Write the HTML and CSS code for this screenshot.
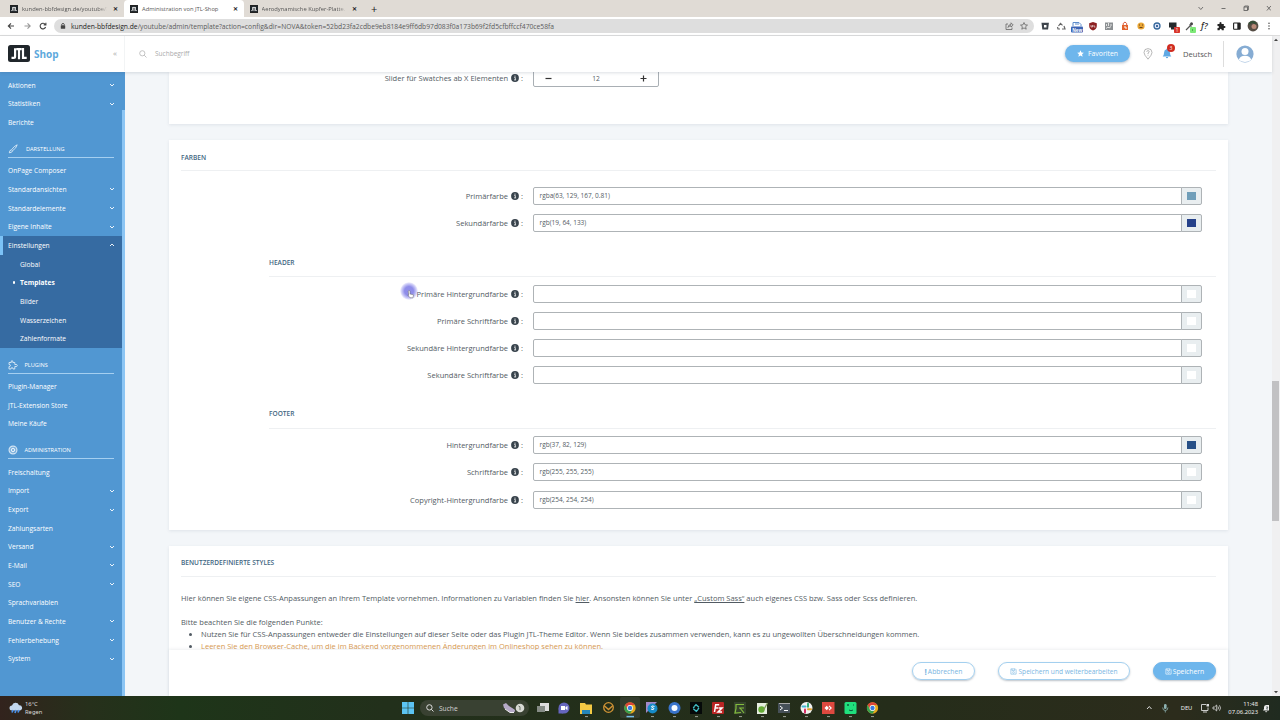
FILE: index.html
```html
<!DOCTYPE html>
<html lang="de">
<head>
<meta charset="utf-8">
<title>Administration von JTL-Shop</title>
<link rel="stylesheet" href="styles.css">
</head>
<body>
<svg width="0" height="0" class="defs">
  <symbol id="jtl" viewBox="0 0 22 17"><rect width="22" height="17" rx="2.5" fill="#20262b"/><path d="M3.500 12.800h2.200q1.400 0 1.400-1.400V3.200M8.300 4.200h5.400M11 4.200v10M15 3v9.800h3.700" fill="none" stroke="#fff" stroke-width="2.200"/></symbol>
  <symbol id="down" viewBox="0 0 6 6"><path d="M1 2l2 2 2-2" fill="none" stroke="currentColor" stroke-width=".9"/></symbol>
  <symbol id="info" viewBox="0 0 8 8"><circle cx="4" cy="4" r="3.900" fill="#38434c"/><path d="M3.300 3.500h1v2.300M3.100 5.900h2" stroke="#fff" stroke-width=".8" fill="none"/><circle cx="4" cy="2.100" r=".6" fill="#fff"/></symbol>
  <symbol id="disk" viewBox="0 0 8 8"><path d="M1 1h5l1 1v5H1zM2.300 1v2h3V1" fill="none" stroke="currentColor" stroke-width=".7"/><circle cx="4" cy="5.100" r="1" fill="none" stroke="currentColor" stroke-width=".6"/></symbol>
  <symbol id="chrome" viewBox="0 0 12 12"><circle cx="6" cy="6" r="5.700" fill="#e5a91c"/><path d="M1.100 3.100A5.700 5.700 0 0 1 10.900 3.100H6L3.500 7.400z" fill="#dc4639"/><path d="M1.100 3.100A5.700 5.700 0 0 0 6 11.700L8.500 7.400 6 8.600 3.500 7.400z" fill="#37a04f"/><circle cx="6" cy="6" r="2.900" fill="#fff"/><circle cx="6" cy="6" r="2.200" fill="#3b7be0"/></symbol>
</svg>

<div class="tabs">
  <div class="tab"><svg class="fav"><use href="#jtl"/></svg><span class="ttl t1">kunden-bbfdesign.de/youtube/?</span><span class="x">✕</span></div>
  <div class="tab on"><svg class="fav"><use href="#jtl"/></svg><span class="ttl t2">Administration von JTL-Shop</span><span class="x">✕</span></div>
  <div class="tab"><svg class="fav"><use href="#jtl"/></svg><span class="ttl t3">Aerodynamische Kupfer-Platte. E</span><span class="x">✕</span></div>
  <span class="plus">+</span>
  <svg class="win" viewBox="0 0 80 16"><g fill="none" stroke="#555" stroke-width=".8"><path d="M7.500 6l2.300 2.500L12 6M30.500 7.500h4"/><rect x="53" y="6" width="3.500" height="3.500"/><path d="M54 5.800V5h3.700v3.800h-1M76.200 5l4 4.500M80.200 5l-4 4.500" transform="translate(-.3)"/></g></svg>
</div>

<div class="toolbar">
  <svg class="nav" viewBox="0 0 54 18"><g fill="none" stroke="#444" stroke-width="1.100"><path d="M14 9H8.500M11 6.300L8.300 9l2.700 2.700"/><path d="M24.500 9H30M27.500 6.300L30.200 9l-2.700 2.700" stroke="#999"/><path d="M45.300 7.500A2.800 2.800 0 1 0 45.600 10M45.900 5.800v2.100h-2.200"/></g></svg>
  <div class="url">
    <svg class="lock" viewBox="0 0 6 8"><rect x=".8" y="3.200" width="4.400" height="3.600" rx=".5" fill="#444"/><path d="M1.800 3.300V2q1.200-1.600 2.400 0v1.300" fill="none" stroke="#444" stroke-width=".8"/></svg>
    <span class="addr"><b>kunden-bbfdesign.de</b>/youtube/admin/template?action=config&amp;dir=NOVA&amp;token=52bd23fa2cdbe9eb8184e9ff6db97d083f0a173b69f2fd5cfbffccf470ce58fa</span>
    <svg class="share" viewBox="0 0 26 10"><g fill="none" stroke="#666" stroke-width=".8"><path d="M4 3H2v5.500h6V6.500M4 6.500Q4.200 3.500 7 3.500V1.800L9.200 4 7 6V4.700Q5 4.700 4 6.500zM20 1.500l1 2.300 2.500.3-1.900 1.600.6 2.500L20 6.900l-2.200 1.300.6-2.500-1.900-1.600 2.500-.3z"/></g></svg>
  </div>
  <svg class="ext" viewBox="1037 17 243 18">
    <path d="M1041.500 22.800h7.400l-.8 6.700h-5.800z" fill="#3d444b"/><path d="M1044 25h2.500v2.500h-2.500z" fill="#fff"/>
    <path d="M1058.500 26l2-2.700 2 2M1064 26l1 3h-3M1060 29h-2l-.5-2" fill="none" stroke="#666" stroke-width="1.200"/>
    <path d="M1073 26v-3.500h6l2 2V26" fill="none" stroke="#5d8ccb"/><path d="M1075 24h4" stroke="#5d8ccb"/><rect x="1071" y="26.500" width="12" height="6" rx="1" fill="#3d64b4"/><text x="1072.200" y="31.500" font-size="4.500" font-weight="700" fill="#fff">New</text>
    <path d="M1093 22l3.800 1.200V26q0 3-3.800 4.500-3.800-1.500-3.800-4.500v-2.800z" fill="#8c2021"/><path d="M1091 25v2h1.500v-2M1094 25v2h1.500" stroke="#fff" stroke-width=".6" fill="none"/>
    <path d="M1105 22.500h8v7.500h-8z" fill="#8c9093"/><path d="M1106.500 24v2M1108.500 23v3M1111 24v2M1106 28.500l2-1.500 1 1 2-1.500" stroke="#eee" stroke-width=".9" fill="none"/>
    <path d="M1122 25h6v5h-6z" fill="#e2632c"/><path d="M1123.200 25v-1.500q1.800-3 3.500 0V25" stroke="#d8593b" fill="none"/><path d="M1124 27h2v2" stroke="#fff" fill="none"/>
    <circle cx="1141" cy="26" r="3.600" fill="#e8a534"/><path d="M1139 25h1M1142 25h1M1139.500 27.500h3" stroke="#6d431c"/>
    <circle cx="1157" cy="26" r="3" fill="#eef" stroke="#37699c" stroke-width="1.300"/><circle cx="1157" cy="26" r="1.200" fill="#37699c"/>
    <path d="M1169 22.500h7.500v5h-2.500v2h-3v-2h-2z" fill="#252a2d"/><rect x="1174" y="27" width="6" height="6" rx=".8" fill="#d8352c"/><text x="1175.700" y="31.700" font-size="4.500" fill="#fff">1</text>
    <path d="M1186 30l4.500-4.500M1189.500 24.500l2 2" stroke="#555" stroke-width="1.200"/><circle cx="1191.500" cy="23.800" r="1.500" fill="#444"/><rect x="1190" y="27" width="6" height="6" rx="1" fill="#7de977"/><path d="M1192 30h1" stroke="#286f2b"/>
    <text x="1201" y="29" font-size="8.500" font-style="italic" font-weight="600" fill="#333">f?</text>
    <path d="M1217.500 24h2q-.4-2 1-2t1 2h2.300v2q1.700-.4 1.700 1t-1.700 1v2.200h-2q0-1.500-1.100-1.500t-1.100 1.500h-2.100v-2.300q1.600 0 1.600-1t-1.600-1z" fill="#252525"/>
    <rect x="1233.600" y="23" width="6.500" height="6.200" rx=".5" fill="#fff" stroke="#222" stroke-width="1.100"/><path d="M1237.300 23h3v6h-3z" fill="#222"/>
    <circle cx="1253" cy="26" r="5.400" fill="#554d45"/><circle cx="1254" cy="26.500" r="2.500" fill="#b98978"/><path d="M1249 24q4-4 7 0" stroke="#334e36" stroke-width="2" fill="none"/>
    <g fill="#333"><circle cx="1269" cy="23.300" r=".7"/><circle cx="1269" cy="26" r=".7"/><circle cx="1269" cy="28.700" r=".7"/></g>
  </svg>
</div>

<div class="page">
  <div class="site">
    <header class="head">
      <div class="brand"><svg class="logo"><use href="#jtl"/></svg><span class="shop">Shop</span><span class="coll">«</span></div>
      <svg class="mag" viewBox="0 0 8 8"><circle cx="3.300" cy="3.300" r="2.600" fill="none" stroke="#b5b5b5" stroke-width=".8"/><path d="M5.200 5.200L7.500 7.500" stroke="#b5b5b5" stroke-width=".8"/></svg>
      <span class="such">Suchbegriff</span>
      <div class="favbtn"><svg viewBox="0 0 8 8"><path d="M4 .3l1.100 2.500 2.700.3-2 1.800.6 2.700L4 6.200 1.600 7.600l.6-2.700-2-1.800 2.700-.3z" fill="#fff"/></svg><span>Favoriten</span></div>
      <svg class="pin" viewBox="0 0 10 12"><path d="M5 11.200Q1 6.800 1 4.500a4 3.900 0 0 1 8 0Q9 6.800 5 11.200zM3.700 3.800Q3.900 2.600 5 2.600q1.200 0 1.200 1.100Q6.200 4.500 5 5v1M5 6.800v.8" fill="none" stroke="#888" stroke-width=".6"/></svg>
      <div class="bell"><svg viewBox="0 0 10 11"><path d="M5 .5Q5.600.5 5.600 1.300 8 2 8 5q0 2.300 1.300 3.400H.7Q2 7.300 2 5q0-3 2.400-3.700Q4.400.5 5 .5zM3.800 9h2.400Q6 10.300 5 10.300T3.800 9z" fill="#5fa9e4"/></svg><span class="cnt">3</span></div>
      <span class="lang">Deutsch</span>
      <svg class="user" viewBox="0 0 18 18"><circle cx="9" cy="9" r="8.600" fill="#86acd3"/><circle cx="9" cy="6.600" r="3.500" fill="#fff"/><path d="M2.800 14.700Q4 10.700 9 10.700t6.200 4Q13 17 9 17t-6.200-2.300z" fill="#fff"/></svg>
    </header>
    <div class="body">
      <nav class="side">
        <div class="menu">
          <a class="it">Aktionen<svg><use href="#down"/></svg></a><a class="it">Statistiken<svg><use href="#down"/></svg></a><a class="it">Berichte</a>
          <div class="sec s1"><svg viewBox="0 0 10 10"><path d="M9.200.8Q6 2 3.500 5.800l1 1Q8.500 4 9.200.8zM3.300 6Q1.500 6 1.300 8.800 4 8.800 4.400 7" fill="none" stroke="#fff" stroke-width=".7"/></svg><span>DARSTELLUNG</span></div>
          <a class="it">OnPage Composer</a><a class="it">Standardansichten<svg><use href="#down"/></svg></a><a class="it">Standardelemente<svg><use href="#down"/></svg></a><a class="it">Eigene Inhalte<svg><use href="#down"/></svg></a>
          <div class="open">
            <a class="it cur">Einstellungen<svg class="up"><use href="#down"/></svg></a>
            <a class="it sub">Global</a><a class="it sub act">Templates</a><a class="it sub">Bilder</a><a class="it sub">Wasserzeichen</a><a class="it sub">Zahlenformate</a>
          </div>
          <div class="sec s2"><svg viewBox="0 0 10 10"><path d="M1 2.500h2.300Q2.800.6 4 .6t.8 1.900h2v2Q9.300 4 9.300 5.500T6.800 6.500V9H5Q5 7.500 4 7.500T3 9H1V6.500q1.500 0 1.500-1T1 4.500z" fill="none" stroke="#fff" stroke-width=".7"/></svg><span>PLUGINS</span></div>
          <a class="it">Plugin-Manager</a><a class="it">JTL-Extension Store</a><a class="it">Meine Käufe</a>
          <div class="sec s3"><svg viewBox="0 0 10 10"><g fill="none" stroke="#fff"><circle cx="5" cy="5" r="3.900" stroke-width="1.200" opacity=".75"/><circle cx="5" cy="5" r="1.700" stroke-width=".8"/></g><circle cx="5" cy="5" r="3" fill="#fff" opacity=".3"/></svg><span>ADMINISTRATION</span></div>
          <a class="it">Freischaltung</a><a class="it">Import<svg><use href="#down"/></svg></a><a class="it">Export<svg><use href="#down"/></svg></a><a class="it">Zahlungsarten</a><a class="it">Versand<svg><use href="#down"/></svg></a><a class="it">E-Mail<svg><use href="#down"/></svg></a><a class="it">SEO<svg><use href="#down"/></svg></a><a class="it">Sprachvariablen</a><a class="it">Benutzer &amp; Rechte<svg><use href="#down"/></svg></a><a class="it">Fehlerbehebung<svg><use href="#down"/></svg></a><a class="it">System<svg><use href="#down"/></svg></a>
        </div>
        <div class="sbar"></div>
      </nav>
      <main class="main">
        <section class="card c1">
          <div class="row"><span class="lab">Slider für Swatches ab X Elementen</span><svg class="inf"><use href="#info"/></svg><span class="col">:</span>
            <div class="num"><svg viewBox="0 0 7 7"><path d="M.5 3.500h6"/></svg><span>12</span><svg viewBox="0 0 7 7"><path d="M.5 3.500h6M3.500.5v6"/></svg></div></div>
        </section>
        <section class="card c2">
          <h2>FARBEN</h2>
          <div class="rows g1">
            <div class="row"><span class="lab">Primärfarbe</span><svg class="inf"><use href="#info"/></svg><span class="col">:</span><div class="inp">rgba(63, 129, 167, 0.81)</div><div class="sw"><i class="a"></i></div></div>
            <div class="row"><span class="lab">Sekundärfarbe</span><svg class="inf"><use href="#info"/></svg><span class="col">:</span><div class="inp">rgb(19, 64, 133)</div><div class="sw"><i class="b"></i></div></div>
          </div>
          <h3>HEADER</h3>
          <div class="rows g2">
            <div class="row"><span class="lab">Primäre Hintergrundfarbe</span><svg class="inf"><use href="#info"/></svg><span class="col">:</span><div class="inp"></div><div class="sw"><i></i></div></div>
            <div class="row"><span class="lab">Primäre Schriftfarbe</span><svg class="inf"><use href="#info"/></svg><span class="col">:</span><div class="inp"></div><div class="sw"><i></i></div></div>
            <div class="row"><span class="lab">Sekundäre Hintergrundfarbe</span><svg class="inf"><use href="#info"/></svg><span class="col">:</span><div class="inp"></div><div class="sw"><i></i></div></div>
            <div class="row"><span class="lab">Sekundäre Schriftfarbe</span><svg class="inf"><use href="#info"/></svg><span class="col">:</span><div class="inp"></div><div class="sw"><i></i></div></div>
          </div>
          <h3>FOOTER</h3>
          <div class="rows g2">
            <div class="row"><span class="lab">Hintergrundfarbe</span><svg class="inf"><use href="#info"/></svg><span class="col">:</span><div class="inp">rgb(37, 82, 129)</div><div class="sw"><i class="c"></i></div></div>
            <div class="row"><span class="lab">Schriftfarbe</span><svg class="inf"><use href="#info"/></svg><span class="col">:</span><div class="inp">rgb(255, 255, 255)</div><div class="sw"><i></i></div></div>
            <div class="row"><span class="lab">Copyright-Hintergrundfarbe</span><svg class="inf"><use href="#info"/></svg><span class="col">:</span><div class="inp">rgb(254, 254, 254)</div><div class="sw"><i></i></div></div>
          </div>
        </section>
        <section class="card c3">
          <h2>BENUTZERDEFINIERTE STYLES</h2>
          <p class="p1">Hier können Sie eigene CSS-Anpassungen an Ihrem Template vornehmen. Informationen zu Variablen finden Sie <u>hier</u>. Ansonsten können Sie unter <u>„Custom Sass“</u> auch eigenes CSS bzw. Sass oder Scss definieren.</p>
          <p class="p2">Bitte beachten Sie die folgenden Punkte:</p>
          <ul><li>Nutzen Sie für CSS-Anpassungen entweder die Einstellungen auf dieser Seite oder das Plugin JTL-Theme Editor. Wenn Sie beides zusammen verwenden, kann es zu ungewollten Überschneidungen kommen.</li><li><span class="or">Leeren Sie den Browser-Cache, um die im Backend vorgenommenen Änderungen im Onlineshop sehen zu können.</span></li></ul>
        </section>
        <div class="actions">
          <div class="btn b1"><b>!</b><span>Abbrechen</span></div>
          <div class="btn b2"><svg><use href="#disk"/></svg><span>Speichern und weiterbearbeiten</span></div>
          <div class="btn b3"><svg><use href="#disk"/></svg><span>Speichern</span></div>
        </div>
      </main>
    </div>
  </div>
  <div class="scroll"><svg viewBox="0 0 8 8"><path d="M2 5l2-2.300L6 5z" fill="#444"/></svg><div class="thumb"></div><svg viewBox="0 0 8 8"><path d="M2 3l2 2.300L6 3z" fill="#444"/></svg></div>
</div>

<div class="task">
  <svg class="wx" viewBox="0 0 14 12"><path d="M3 8.500a2.500 2.500 0 0 1 0-5 3.700 3.700 0 0 1 7-.3 2.700 2.700 0 0 1 1 5.300z" fill="#c3d7ee"/><path d="M4 8l-1 2.500M7 8l-1 3M10 8l-1 2.500" stroke="#4a90e8" stroke-width="1.700"/></svg>
  <div class="temp"><span>16°C</span><span>Regen</span></div>
  <svg class="start" viewBox="0 0 12 12"><path d="M0 0h5.700v5.700H0zM6.300 0H12v5.700H6.300zM0 6.300h5.700V12H0zM6.300 6.300H12V12H6.300z" fill="#5cc4f2"/></svg>
  <div class="find"><svg class="fm" viewBox="0 0 8 8"><circle cx="3.400" cy="3.400" r="2.700" fill="none" stroke="#ddd"/><path d="M5.300 5.300l2.200 2.200" stroke="#ddd"/></svg><span>Suche</span><svg class="shoe" viewBox="0 0 24 12"><path d="M1 2.500L4 1l3 3 5.500 3.500q1.500 2-1 3H8L2 6z" fill="#b6a9c8"/><path d="M3 7l5 3.500h4" stroke="#eee" fill="none"/><circle cx="18" cy="6" r="4.300" fill="#d8d9d4"/><path d="M16.500 4l1.500.8v3.400M18 .5v1.500" stroke="#4d554b" stroke-width=".8" fill="none"/></svg></div>
  <svg class="apps" viewBox="530 696 360 24">
    <path d="M540 703h9v8h-9z" fill="#ddd"/><path d="M537 706h8v6h-8z" fill="#858b85"/>
    <circle cx="564" cy="708" r="5.500" fill="#6565bd"/><path d="M558.500 708v5.500h5z" fill="#6565bd"/><path d="M561 706h4v4h-4zM565.500 707l2-1v4l-2-1z" fill="#fff"/>
    <path d="M580 703h5l1 1.500h6V714h-12z" fill="#f3c944"/><path d="M582 710h8v4h-8z" fill="#2586b9"/>
    <circle cx="608.500" cy="707.500" r="4.800" fill="none" stroke="#d09335" stroke-width="1.300"/><path d="M604 705.500l4.500 4 4.500-4" fill="none" stroke="#d09335" stroke-width="1.500"/>
    <rect x="620" y="697" width="20" height="21" rx="2" fill="#333c2d"/><use href="#chrome" x="624" y="702" width="12" height="12"/><path d="M626.500 716.600h7.500" stroke="#75bce7" stroke-width="1.500"/>
    <path d="M646 702h11l-11 11z" fill="#a28ac9"/><circle cx="652.500" cy="708.500" r="5" fill="#168bc7"/><path d="M654.500 706.500q-3-1.500-3 .5l2.500 1.500q0 2-3 .5" fill="none" stroke="#fff"/>
    <circle cx="674.500" cy="708" r="6" fill="#3974cb"/><circle cx="674.500" cy="708" r="3" fill="#f7fbff"/>
    <rect x="690" y="702" width="12" height="12" fill="#050909"/><path d="M694.500 706.200l1.500-1.500 3 2.500M693.200 708l1.300-1.500M697.800 709.800l-1.500 1.500-3-2.500M699 708l-1.300 1.500" fill="none" stroke="#43c1c7" stroke-width="1.300"/>
    <rect x="712" y="702" width="12" height="12" rx="1" fill="#b92524"/><path d="M714.500 712l1.200-7.200h3.500M715 708h3M718.500 708h3.500l-4 4h4" fill="none" stroke="#fff" stroke-width="1.500"/>
    <rect x="734" y="702" width="12" height="12" fill="#34422c"/><path d="M744 704.500h-8v4l-1 4.500 6-.5M739 708h5M740 708l4 5" fill="none" stroke="#83bc3d" stroke-width="1.200"/>
    <rect x="757" y="703" width="10" height="11" fill="#e6eee0"/><circle cx="761.500" cy="709.500" r="3.200" fill="#65ad36"/><path d="M767.500 703l-4 7" stroke="#7b9856" stroke-width="1.300"/>
    <rect x="778" y="703" width="12" height="10" fill="#465058"/><path d="M779 703.500h11" stroke="#aaa"/><path d="M780 706l2.500 2-2.500 2M784 710.500h4" fill="none" stroke="#fff"/>
    <circle cx="806.500" cy="708" r="6" fill="#f1f2f1"/><g stroke-width="2" stroke-linecap="round"><path d="M802.500 706.500h3" stroke="#44b8d6"/><path d="M808 703.800v3" stroke="#35ad78"/><path d="M808 709.300h3" stroke="#dfa22d"/><path d="M805 709.500v3" stroke="#d62b63"/></g>
    <rect x="822" y="702" width="12.500" height="12" fill="#de493f"/><path d="M824.500 708l2.200-2.200 2.200 2.200-2.200 2.200z" fill="#fff"/><path d="M829 705.800l2.200 2.200-2.200 2.200" fill="none" stroke="#fff" stroke-width="1.100"/>
    <rect x="844.500" y="702" width="12" height="12" rx="1.500" fill="#20df7d"/><path d="M847 705h2M848 704v2M853 705h1M849 710q2 1.500 4 0" stroke="#0b5c3e" fill="none"/>
    <use href="#chrome" x="866.500" y="702" width="12" height="12"/>
    <path d="M585 716.600h3M651 716.600h3M673 716.600h3M695 716.600h3M717 716.600h3M739 716.600h3M761 716.600h3M783 716.600h3M805 716.600h3M827 716.600h3M849 716.600h3M871 716.600h3" stroke="#9ca197"/>
  </svg>
  <div class="tray">
    <svg class="tr1" viewBox="0 0 26 12"><path d="M1 7l2.300-2.500L5.500 7" fill="none" stroke="#ddd"/><rect x="18" y="2" width="2.600" height="5" rx="1.300" fill="#8eb3b3"/><path d="M16.700 5.500q0 3 2.600 3t2.600-3M19.300 8.500v2" fill="none" stroke="#8eb3b3" stroke-width=".8"/></svg>
    <span class="deu">DEU</span>
    <svg class="tr2" viewBox="0 0 22 10"><path d="M6 1.500H1.500v6H8V4.500M3 9h4" fill="none" stroke="#ddd" stroke-width=".9"/><path d="M6.500 1H9v2.500H6.500z" fill="#ddd"/><path d="M13 4h1.500L16.700 2v6L14.500 6H13zM18 3.500q1 1.500 0 3M19.500 2.300q2 2.700 0 5.400" fill="none" stroke="#ddd" stroke-width=".8"/></svg>
    <div class="clock"><span>11:48</span><span>07.06.2023</span></div>
    <svg class="tr3" viewBox="0 0 8 9"><path d="M1 6.500L2 5V3Q2.200 1 4.500 1H7v5.500zM3 7.300h2.500L4 8.500z" fill="#eee"/><path d="M4 3h2L4.500 5H6" fill="none" stroke="#344" stroke-width=".7"/></svg>
  </div>
</div>
<div class="spot"><svg viewBox="0 0 8 9"><path d="M2 .5q1 0 1 1V4l3.500.8-.5 3H3L.8 5l1 .2-.6-4.200z" fill="#fff" stroke="#666" stroke-width=".5"/></svg></div>
</body>
</html>
```
FILE: styles.css
```css
* { box-sizing: border-box; }
body { margin: 0; width: 1280px; height: 720px; overflow: hidden; display: flex; flex-direction: column; font-family: "Open Sans", "Noto Sans", sans-serif; font-size: 7.520px; color: #525b63; background: #fff; position: relative; }
svg { display: block; flex: none; }
span { white-space: nowrap; }
.defs { position: absolute; }

.tabs { height: 17px; background: #e0dbd5; display: flex; flex: none; align-items: center; }
.tab { width: 119.500px; height: 17px; display: flex; align-items: center; padding: 0 3px 0 6px; font-size: 5.800px; color: #555; }
.tab:first-child { width: 124px; padding-left: 10px; }
.tab.on { background: #fff; border-radius: 4px 4px 0 0; }
.fav { width: 8px; height: 8px; margin-right: 4px; background: #222; }
.ttl { flex: 1; }
.t1, .t3 { -webkit-mask-image: linear-gradient(90deg, #000 84%, transparent 94%); mask-image: linear-gradient(90deg, #000 84%, transparent 94%); }
.x { font-size: 6px; font-weight: 700; color: #222; width: 8px; }
.plus { margin-left: 8px; font-size: 11px; line-height: 12px; color: #222; }
.win { width: 80px; height: 16px; margin-left: auto; margin-right: 9px; }

.toolbar { height: 19px; flex: none; display: flex; border-bottom: 1px solid #ddd; }
.nav { width: 54px; height: 18px; }
.url { width: 980px; height: 14px; margin-top: 2px; border-radius: 7px; background: #dedede; display: flex; align-items: center; padding-left: 6px; }
.lock { width: 6px; height: 8px; margin-right: 5px; }
.addr { font-size: 6.720px; color: #5b5b5b; }
.addr b { font-weight: 400; color: #222; }
.share { width: 26px; height: 10px; margin-left: auto; margin-right: 4px; }
.ext { width: 243px; height: 18px; margin-left: 3px; }

.page { height: 660px; flex: none; display: flex; }
.site { width: 1272px; display: flex; flex-direction: column; }
.head { height: 36px; flex: none; background: #fff; display: flex; align-items: center; box-shadow: 0 1px 3px rgba(60, 80, 100, .18); z-index: 2; padding-bottom: 1px; }
.brand { width: 125px; height: 35px; border-right: 1px solid #f2f4f5; display: flex; align-items: center; padding-left: 8px; }
.logo { width: 22px; height: 17px; }
.shop { margin-left: 4px; font-size: 10px; font-weight: 700; color: #5da9dc; }
.coll { margin-left: auto; margin-right: 7px; font-size: 8px; line-height: 8px; padding-bottom: 2px; color: #aaa; }
.mag { width: 8px; height: 8px; margin-left: 14px; }
.such { margin-left: 8px; font-size: 6.500px; color: #aaa; }
.favbtn { width: 65px; height: 17px; margin-left: auto; border-radius: 9px; background: #6eb6ec; box-shadow: 0 1px 3px rgba(40, 80, 120, .4); display: flex; align-items: center; justify-content: center; gap: 4px; color: #fff; font-size: 6.900px; }
.favbtn svg { width: 7px; height: 7px; }
.pin { width: 10px; height: 12px; margin-left: 13px; }
.bell { position: relative; margin-left: 9px; width: 10px; }
.bell svg { width: 10px; height: 11px; }
.cnt { position: absolute; left: 5px; top: -4px; width: 8px; height: 8px; border-radius: 4px; background: #d02c20; color: #fff; font-size: 5px; line-height: 8px; text-align: center; }
.lang { margin-left: 11px; width: 41px; height: 26px; line-height: 26px; border-right: 1px solid #ddd; font-size: 7.600px; color: #555; }
.user { width: 18px; height: 18px; margin: 0 18px 0 12px; }

.body { flex: 1; display: flex; min-height: 0; }
.side { width: 125px; background: #5197d2; display: flex; }
.menu { width: 122px; padding-top: 3.800px; }
.sbar { width: 3px; margin-top: 38px; background: #8bc5f4; }
.it { display: flex; align-items: center; justify-content: space-between; height: 18.670px; padding: 0 7px 0 8px; color: #fff; font-size: 6.670px; font-weight: 500; white-space: nowrap; }
.it svg { width: 6px; height: 6px; }
.it svg.up { transform: rotate(180deg); }
.sec { height: 29.700px; padding: 8.500px 8px 0; color: #fff; font-size: 5.600px; display: grid; grid-template-columns: 10px 1fr; column-gap: 6.500px; grid-template-rows: 17px; align-items: center; background: linear-gradient(#a5cff0, #a5cff0) 8px 25px / 106px 1px no-repeat; }
.s1 { column-gap: 8px; }
.s2 { height: 29.200px; }
.open { background: #366ba2; }
.cur { border-left: 3px solid #7cc2f6; padding-left: 5px; }
.it.sub { padding-left: 20px; position: relative; }
.act { font-weight: 700; }
.act::before { content: ""; position: absolute; left: 12.500px; top: 8px; width: 2.500px; height: 2.500px; border-radius: 50%; background: #fff; }

.main { width: 1147px; height: 624px; overflow: hidden; background: #f3f6f9; padding: 0 44px; position: relative; }
.card { background: #fff; width: 1059px; box-shadow: 0 1px 3px rgba(80, 100, 120, .12); overflow: hidden; padding-left: 12px; }
.c1 { height: 52px; }
.c2 { height: 390px; margin-top: 16px; }
.c3 { height: 160px; margin-top: 15.500px; }
.row { display: flex; align-items: center; height: 18px; }
.c1 .row { margin-top: -3px; }
.lab { width: 327px; text-align: right; }
.inf { width: 8px; height: 8px; margin-left: 2.500px; }
.col { width: 14.500px; padding-left: 2.500px; }
.num { width: 126px; height: 18px; border: 1px solid #a9afb4; border-radius: 2px; display: flex; align-items: center; justify-content: space-between; padding: 0 11px; font-size: 6.700px; }
.num svg { width: 7px; height: 7px; stroke: #333; stroke-width: 1.200; }
.inp { width: 649px; height: 18px; border: 1px solid #aeb3b6; border-radius: 2px 0 0 2px; padding-left: 5.500px; font-size: 6.500px; line-height: 16.500px; }
.sw { width: 21px; height: 18px; margin-left: -1px; border: 1px solid #aeb3b6; border-radius: 0 2px 2px 0; background: #e9eef0; display: flex; align-items: center; justify-content: center; }
.sw i { width: 9px; height: 8px; background: #fff; }
.sw .a { background: #709eb9; }
.sw .b { background: #26418a; }
.sw .c { background: #285087; }
h2, h3 { margin: 0; font-size: 6.550px; line-height: 10px; font-weight: 600; color: #3f6682; }
h2 { height: 31px; padding-top: 12.500px; margin-right: 12px; border-bottom: 1px solid #eef0f2; }
h3 { margin: 0 12px 0 88px; height: 19.500px; border-bottom: 1px solid #eef0f2; }
.rows { display: flex; flex-direction: column; gap: 9.200px; }
.g1 { padding: 16px 0 25.500px; }
.g2 { padding: 7.500px 0 25px; }
p { margin: 0; line-height: 12px; white-space: nowrap; }
.p1 { margin-top: 15.500px; }
.p2 { margin-top: 12px; }
ul { margin: 0; padding-left: 20px; line-height: 12.200px; white-space: nowrap; }
.or { color: #d89a52; }
.actions { position: absolute; left: 44px; bottom: 0; width: 1059px; height: 46px; background: #fff; box-shadow: 0 -1px 3px rgba(80, 100, 120, .1); display: flex; justify-content: flex-end; padding: 12px 12px 0 0; gap: 23px; }
.btn { height: 18px; border: 1px solid #a4d0ef; border-radius: 9px; box-shadow: 0 1px 2px rgba(60, 80, 100, .35); color: #7ab5df; display: flex; align-items: center; justify-content: center; gap: 1px; font-size: 6.800px; line-height: 9px; }
.btn b { font-size: 8px; }
.btn svg { width: 7px; height: 7px; }
.b1 { width: 63px; }
.b2 { width: 132px; font-size: 6.600px; }
.b3 { width: 63px; background: #6eb6ec; border-color: #6eb6ec; color: #fff; }
.scroll { width: 8px; background: #f0f0f1; display: flex; flex-direction: column; justify-content: space-between; }
.scroll svg { width: 8px; height: 8px; }
.thumb { width: 7px; height: 140px; margin: 329px 0 159px; background: #c1c1c3; }

.task { height: 24px; flex: none; background: linear-gradient(90deg, #32231d 0, #26301b 7%, #1e3519 14%, #22301b 30%, #252d1a 70%, #2c2c1c 92%, #202b20); display: flex; align-items: center; color: #eee; font-family: "Noto Sans", sans-serif; font-size: 5.800px; }
.wx { width: 14px; height: 12px; margin-left: 9px; }
.temp { display: flex; flex-direction: column; margin-left: 2px; line-height: 8px; width: 377px; color: #ddd; }
.start { width: 12px; height: 12px; }
.find { width: 109px; height: 16px; margin-left: 6px; border-radius: 8px; background: #394132; display: flex; align-items: center; padding-left: 6px; font-size: 6.600px; color: #ccc; }
.fm { width: 8px; height: 8px; margin-right: 5px; }
.shoe { width: 24px; height: 12px; margin-left: auto; margin-right: 3px; }
.apps { width: 360px; height: 24px; margin-left: 1px; }
.tray { margin-left: auto; display: flex; align-items: center; }
.tr1 { width: 26px; height: 12px; }
.deu { margin: 0 8px 0 9px; }
.tr2 { width: 22px; height: 10px; }
.clock { display: flex; flex-direction: column; text-align: right; line-height: 8px; margin-left: 6px; }
.tr3 { width: 8px; height: 9px; margin: 0 10px 0 4px; }
.spot { position: absolute; left: 400px; top: 282px; width: 18px; height: 18px; border-radius: 50%; background: radial-gradient(#8f8de9 35%, rgba(160, 158, 240, .5) 58%, transparent 72%); }
.spot svg { width: 8px; height: 9px; margin: 8px 0 0 7px; }
```
